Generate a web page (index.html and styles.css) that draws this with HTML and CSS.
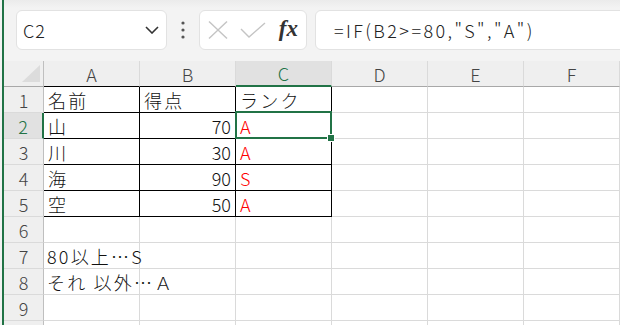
FILE: index.html
```html
<!DOCTYPE html>
<html lang="ja">

<head>
    <meta charset="UTF-8">
    <title>Sheet1</title>
    <link rel="stylesheet" href="styles.css">
</head>

<body>
    <div class="window">
        <div class="toolbar">
            <div class="namebox">
                <span class="namebox__text">C2</span>
                <svg class="namebox__arrow" width="14" height="8" viewBox="0 0 14 8">
                    <polyline points="1,1 7,7 13,1" fill="none" stroke="#333" stroke-width="1.6"/>
                </svg>
            </div>
            <div class="grip">
                <svg width="4" height="18" viewBox="0 0 4 18">
                    <circle cx="2" cy="2" r="1.6" fill="#555"/>
                    <circle cx="2" cy="9" r="1.6" fill="#555"/>
                    <circle cx="2" cy="16" r="1.6" fill="#555"/>
                </svg>
            </div>
            <div class="fxbox">
                <svg class="fxbox__cancel" width="20" height="18" viewBox="0 0 20 18">
                    <line x1="1" y1="0.5" x2="19" y2="17.5" stroke="#c4c4c4" stroke-width="1.4"/>
                    <line x1="19" y1="0.5" x2="1" y2="17.5" stroke="#c4c4c4" stroke-width="1.4"/>
                </svg>
                <svg class="fxbox__enter" width="26" height="16" viewBox="0 0 26 16">
                    <polyline points="1,7 9,15 25,1" fill="none" stroke="#c4c4c4" stroke-width="1.4"/>
                </svg>
                <span class="fxbox__fx">fx</span>
            </div>
            <div class="formula">=IF(B2&gt;=80,"S","A")</div>
        </div>

        <div class="sheet">
            <div class="hd corner">
                <svg width="18" height="17" viewBox="0 0 18 17"><polygon points="18,0 18,17 0,17" fill="#dcdcdc"/></svg>
            </div>
            <div class="hd col edge">A</div>
            <div class="hd col edge">B</div>
            <div class="hd col active">C</div>
            <div class="hd col">D</div>
            <div class="hd col">E</div>
            <div class="hd col">F</div>

            <div class="hd row">1</div>
            <div class="c b">名前</div>
            <div class="c b">得点</div>
            <div class="c b">ランク</div>
            <div class="c"></div><div class="c"></div><div class="c"></div>

            <div class="hd row active">2</div>
            <div class="c b">山</div>
            <div class="c b num">70</div>
            <div class="c b red sel">A</div>
            <div class="c"></div><div class="c"></div><div class="c"></div>

            <div class="hd row">3</div>
            <div class="c b">川</div>
            <div class="c b num">30</div>
            <div class="c b red">A</div>
            <div class="c"></div><div class="c"></div><div class="c"></div>

            <div class="hd row">4</div>
            <div class="c b">海</div>
            <div class="c b num">90</div>
            <div class="c b red">S</div>
            <div class="c"></div><div class="c"></div><div class="c"></div>

            <div class="hd row">5</div>
            <div class="c b">空</div>
            <div class="c b num">50</div>
            <div class="c b red">A</div>
            <div class="c"></div><div class="c"></div><div class="c"></div>

            <div class="hd row">6</div>
            <div class="c"></div><div class="c"></div><div class="c"></div>
            <div class="c"></div><div class="c"></div><div class="c"></div>

            <div class="hd row">7</div>
            <div class="c spill">80以上…S</div><div class="c"></div><div class="c"></div>
            <div class="c"></div><div class="c"></div><div class="c"></div>

            <div class="hd row">8</div>
            <div class="c spill">それ 以外…Ａ</div><div class="c"></div><div class="c"></div>
            <div class="c"></div><div class="c"></div><div class="c"></div>

            <div class="hd row">9</div>
            <div class="c"></div><div class="c"></div><div class="c"></div>
            <div class="c"></div><div class="c"></div><div class="c"></div>

            <div class="hd row"></div>
            <div class="c"></div><div class="c"></div><div class="c"></div>
            <div class="c"></div><div class="c"></div><div class="c"></div>
        </div>
    </div>
</body>

</html>
```

FILE: styles.css
```css
body {
    margin: 0;
    font-family: "Noto Sans CJK JP", "Noto Sans", sans-serif;
    font-weight: 300;
}

.window {
    width: 620px;
    height: 325px;
    overflow: hidden;
    background: #f3f3f3;
    padding-left: 2px;
    box-sizing: border-box;
}

.toolbar, .sheet {
    border-left: 2px solid #217346;
}

/* formula bar */
.toolbar {
    height: 61px;
    box-sizing: border-box;
    padding: 10px 0 0 12px;
    display: flex;
    align-items: flex-start;
    background: linear-gradient(#ebebeb, #f3f3f3 8px);
    overflow: hidden;
}
.toolbar > div {
    flex-shrink: 0;
}
.namebox, .fxbox, .formula {
    height: 40px;
    box-sizing: border-box;
    background: #fff;
    border: 1px solid #e2e2e2;
    border-radius: 6px;
    display: flex;
    align-items: center;
}
.namebox {
    width: 151px;
    padding: 0 7px 0 6px;
    justify-content: space-between;
}
.namebox__text {
    font-size: 18px;
    color: #222;
    line-height: 1;
    letter-spacing: 1px;
}
.grip {
    width: 32px;
    height: 40px;
    display: flex;
    align-items: center;
    justify-content: center;
}
.fxbox {
    width: 108px;
    padding: 0 8px;
    justify-content: space-between;
}
.fxbox__fx {
    font-family: "Liberation Serif", serif;
    font-style: italic;
    font-weight: bold;
    font-size: 23px;
    color: #333;
    margin-bottom: 3px;
}
.formula {
    margin-left: 8px;
    width: 330px;
    padding-left: 18px;
    font-size: 18px;
    letter-spacing: 2.4px;
    color: #222;
}

/* sheet */
.sheet {
    display: grid;
    grid-template-columns: 40px repeat(6, 96px);
    grid-auto-rows: 26px;
    background: #fff;
    font-size: 18px;
}
.hd {
    background: #efefef;
    color: #444;
    display: flex;
    align-items: center;
    justify-content: center;
    box-sizing: border-box;
    border-right: 1px solid #dadada;
    border-bottom: 1px solid #dadada;
}
.hd.corner {
    border-right: 1px solid #bfbfbf;
    border-bottom: 1px solid #a8a8a8;
    justify-content: flex-end;
    align-items: flex-end;
    padding: 0 3px 4px 0;
}
.hd.col {
    border-bottom: 1px solid #a8a8a8;
}
.hd.col.edge {
    border-bottom-color: #000;
}
.hd.row {
    border-right: 1px solid #bfbfbf;
}
.hd.active {
    background: #e1e1e1;
    color: #217346;
}
.hd.col.active {
    border-bottom: 2px solid #217346;
}
.hd.row.active {
    border-right: 2px solid #217346;
}

.c {
    box-sizing: border-box;
    border-right: 1px solid #dadada;
    border-bottom: 1px solid #dadada;
    padding: 0 4px;
    display: flex;
    align-items: center;
    color: #111;
    white-space: nowrap;
    letter-spacing: 2.2px;
    position: relative;
}
.c.b {
    border-right-color: #000;
    border-bottom-color: #000;
}
.c.num {
    justify-content: flex-end;
    padding-right: 4px;
    letter-spacing: 0;
}
.c.red {
    color: #ff0000;
}
.c.spill {
    overflow: visible;
    z-index: 1;
    padding-left: 3px;
}
.c.sel::after {
    content: "";
    position: absolute;
    top: -2px;
    left: -1px;
    right: -1px;
    bottom: -1px;
    border: 2px solid #217346;
}
.c.sel::before {
    content: "";
    position: absolute;
    right: -4px;
    bottom: -4px;
    width: 6px;
    height: 6px;
    background: #217346;
    border: 1px solid #fff;
    z-index: 2;
}
```
